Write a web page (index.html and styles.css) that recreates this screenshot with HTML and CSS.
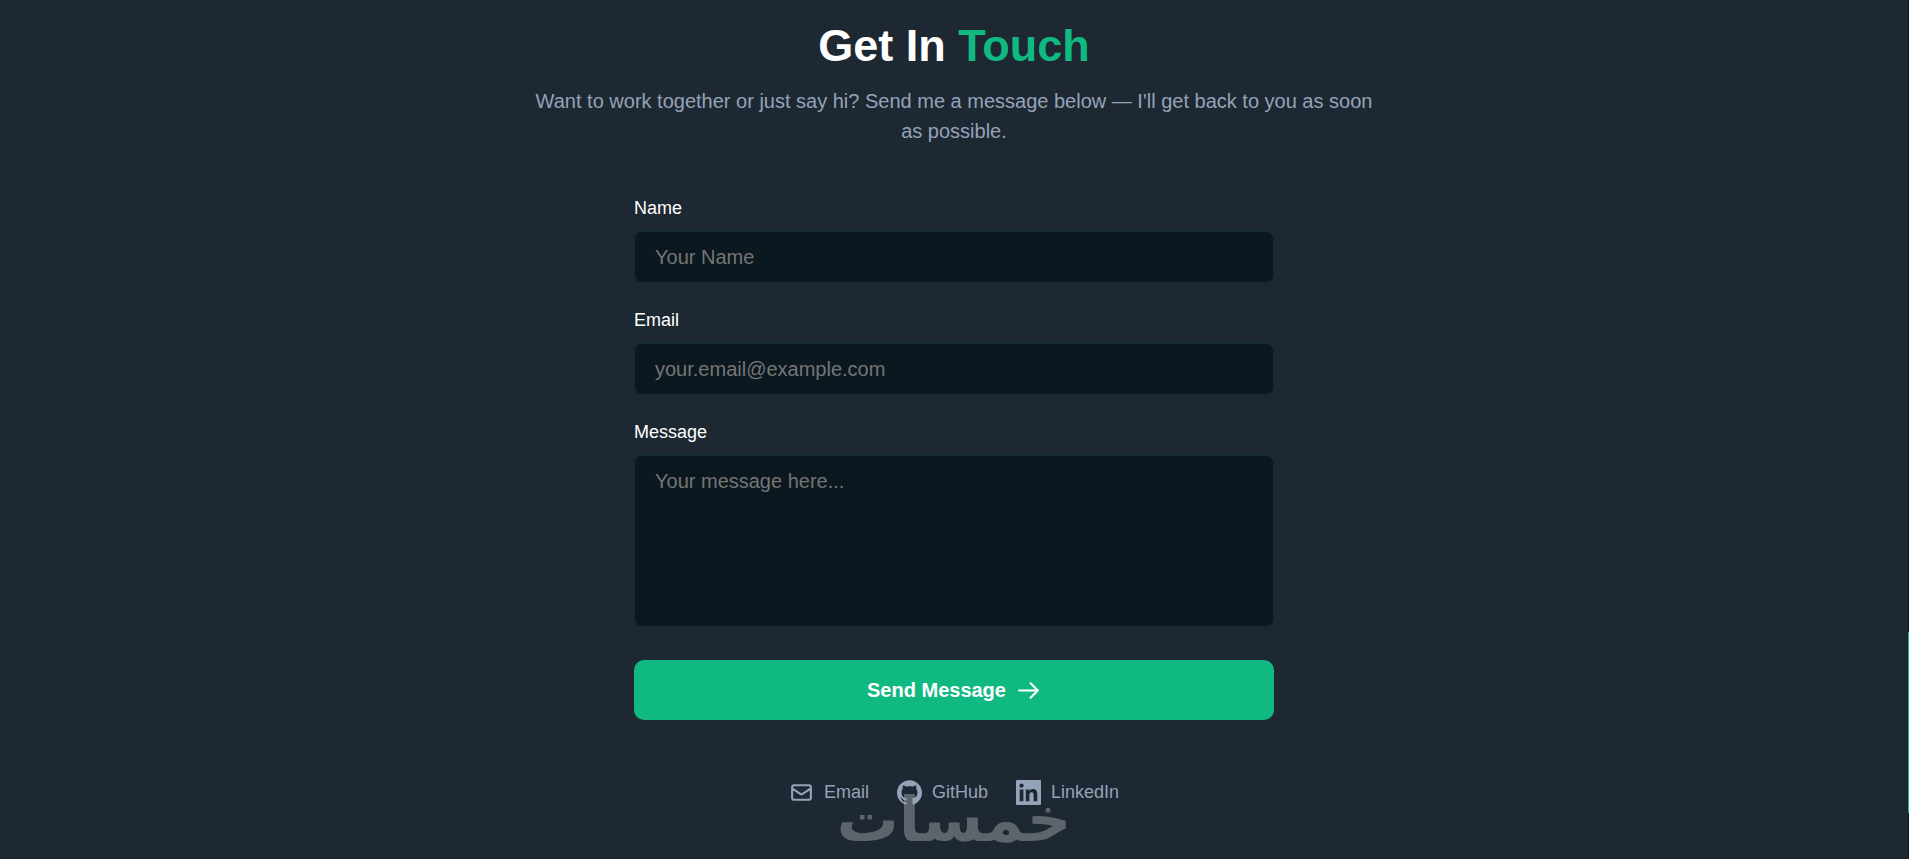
FILE: index.html
```html
<!DOCTYPE html>
<html dir="ltr" lang="en">
<head>
    <meta charset="UTF-8">
    <meta name="viewport" content="width=device-width, initial-scale=1.0">
    <title>Get In Touch</title>
    <link rel="stylesheet" href="styles.css">
</head>
<body>
    <section class="contact" id="contact">
        <div class="contact-header">
            <h2>Get In <span class="accent">Touch</span></h2>
            <p>Want to work together or just say hi? Send me a message below — I'll get back to you as soon as possible.</p>
        </div>

        <form class="contact-form">
            <div class="field">
                <label for="name">Name</label>
                <input type="text" id="name" name="name" placeholder="Your Name">
            </div>
            <div class="field">
                <label for="email">Email</label>
                <input type="email" id="email" name="email" placeholder="your.email@example.com">
            </div>
            <div class="field">
                <label for="message">Message</label>
                <textarea id="message" name="message" placeholder="Your message here..."></textarea>
            </div>
            <button type="submit" class="send-button">
                Send Message
                <svg class="icon line" viewBox="0 0 24 24" aria-hidden="true">
                    <path d="M14 5l7 7m0 0l-7 7m7-7H3"/>
                </svg>
            </button>
        </form>

        <div class="social-area">
            <div class="watermark" lang="ar" dir="rtl">خمسات</div>
            <div class="social-links">
                <a href="#email">
                    <svg class="icon line" viewBox="0 0 24 24" aria-hidden="true">
                        <path d="M3 8l7.89 5.26a2 2 0 002.22 0L21 8M5 19h14a2 2 0 002-2V7a2 2 0 00-2-2H5a2 2 0 00-2 2v10a2 2 0 002 2z"/>
                    </svg>
                    <span>Email</span>
                </a>
                <a href="#github">
                    <svg class="icon solid" viewBox="0 0 24 24" aria-hidden="true">
                        <path d="M12 .297c-6.63 0-12 5.373-12 12 0 5.303 3.438 9.8 8.205 11.385.6.113.82-.258.82-.577 0-.285-.01-1.04-.015-2.04-3.338.724-4.042-1.61-4.042-1.61C4.422 18.07 3.633 17.7 3.633 17.7c-1.087-.744.084-.729.084-.729 1.205.084 1.838 1.236 1.838 1.236 1.07 1.835 2.809 1.305 3.495.998.108-.776.417-1.305.76-1.605-2.665-.3-5.466-1.332-5.466-5.93 0-1.31.465-2.38 1.235-3.22-.135-.303-.54-1.523.105-3.176 0 0 1.005-.322 3.3 1.23.96-.267 1.98-.399 3-.405 1.02.006 2.04.138 3 .405 2.28-1.552 3.285-1.23 3.285-1.23.645 1.653.24 2.873.12 3.176.765.84 1.23 1.91 1.23 3.22 0 4.61-2.805 5.625-5.475 5.92.42.36.81 1.096.81 2.22 0 1.606-.015 2.896-.015 3.286 0 .315.21.69.825.57C20.565 22.092 24 17.592 24 12.297c0-6.627-5.373-12-12-12"/>
                    </svg>
                    <span>GitHub</span>
                </a>
                <a href="#linkedin">
                    <svg class="icon solid" viewBox="0 0 24 24" aria-hidden="true">
                        <path d="M20.447 20.452h-3.554v-5.569c0-1.328-.027-3.037-1.852-3.037-1.853 0-2.136 1.445-2.136 2.939v5.667H9.351V9h3.414v1.561h.046c.477-.9 1.637-1.85 3.37-1.85 3.601 0 4.267 2.37 4.267 5.455v6.286zM5.337 7.433c-1.144 0-2.063-.926-2.063-2.065 0-1.138.92-2.063 2.063-2.063 1.14 0 2.064.925 2.064 2.063 0 1.139-.925 2.065-2.064 2.065zm1.782 13.019H3.555V9h3.564v11.452zM23.2 0H.8C.3 0 0 .3 0 .8v22.4c0 .5.3.8.8.8h22.4c.5 0 .8-.3.8-.8V.8c0-.5-.3-.8-.8-.8z"/>
                    </svg>
                    <span>LinkedIn</span>
                </a>
            </div>
        </div>
    </section>

    <div class="scroll-track" aria-hidden="true">
        <div class="scroll-thumb"></div>
    </div>
</body>
</html>
```
FILE: styles.css
```css
:root {
    --primary-color: #10b981;
    --bg-color: #1d2832;
    --input-bg: #0b1820;
    --input-border: #0e2b2e;
    --text-color: #fff;
    --muted-color: #94a3b8;
    --placeholder-color: #757575;
    --watermark-color: #5c656b;
}

* {
    box-sizing: border-box;
}

body {
    margin: 0;
    padding-right: 1px; /* room for the scrollbar */
    min-height: 100vh;
    font-family: "Liberation Sans", Arial, sans-serif;
    font-size: 20px;
    background: var(--bg-color);
    color: var(--text-color);
}

.contact {
    padding: 21px 20px 0;
}

.contact-header {
    max-width: 840px;
    margin: 0 auto 50px;
    text-align: center;
}

h2 {
    margin: 0 0 15px;
    font-size: 45px;
    line-height: 50px;
    font-weight: bold;
}

.accent {
    color: var(--primary-color);
}

.contact-header p {
    margin: 0;
    line-height: 30px;
    color: var(--muted-color);
}

/* Form */
.contact-form {
    display: flex;
    flex-direction: column;
    gap: 25px;
    max-width: 640px;
    margin: 0 auto;
}

.field {
    display: flex;
    flex-direction: column;
    gap: 11px;
}

label {
    font-size: 18px;
    line-height: 24px;
}

input,
textarea {
    width: 100%;
    padding: 12px 20px;
    border: 1px solid var(--input-border);
    border-radius: 8px;
    background: var(--input-bg);
    color: var(--text-color);
    font-family: inherit;
    font-size: 20px;
    line-height: 26px;
    outline: none;
}

input {
    height: 52px;
}

textarea {
    display: block;
    height: 172px;
    resize: none;
}

input::placeholder,
textarea::placeholder {
    color: var(--placeholder-color);
    opacity: 1;
}

input:focus,
textarea:focus {
    border-color: var(--primary-color);
}

.send-button {
    display: flex;
    align-items: center;
    justify-content: center;
    gap: 10px;
    width: 100%;
    height: 60px;
    margin-top: 8px;
    border: none;
    border-radius: 10px;
    background: var(--primary-color);
    color: var(--text-color);
    font-family: inherit;
    font-size: 20px;
    font-weight: bold;
    cursor: pointer;
}

.icon {
    width: 25px;
    height: 25px;
    flex-shrink: 0;
}

.line {
    fill: none;
    stroke: currentColor;
    stroke-width: 2;
    stroke-linecap: round;
    stroke-linejoin: round;
}

.solid {
    fill: currentColor;
}

/* Social links */
.social-area {
    position: relative;
    margin-top: 60px;
}

.social-links {
    position: relative;
    display: flex;
    justify-content: center;
    gap: 28px;
}

.social-links a {
    display: flex;
    align-items: flex-start;
    gap: 10px;
    font-size: 18px;
    line-height: 24px;
    color: var(--muted-color);
    text-decoration: none;
}

.social-links a:hover {
    color: var(--primary-color);
}

.watermark {
    position: absolute;
    top: 8px;
    left: 0;
    width: 100%;
    text-align: center;
    font-family: "DejaVu Sans", sans-serif;
    font-size: 62px;
    line-height: 64px;
    font-weight: bold;
    color: var(--watermark-color);
    pointer-events: none;
}

/* Thin page scrollbar */
.scroll-track {
    position: fixed;
    top: 0;
    right: 0;
    bottom: 0;
    width: 1px;
    background: #0b1820;
}

.scroll-thumb {
    position: absolute;
    top: 73.6%;
    width: 100%;
    height: 21%;
    background: var(--primary-color);
}
```
